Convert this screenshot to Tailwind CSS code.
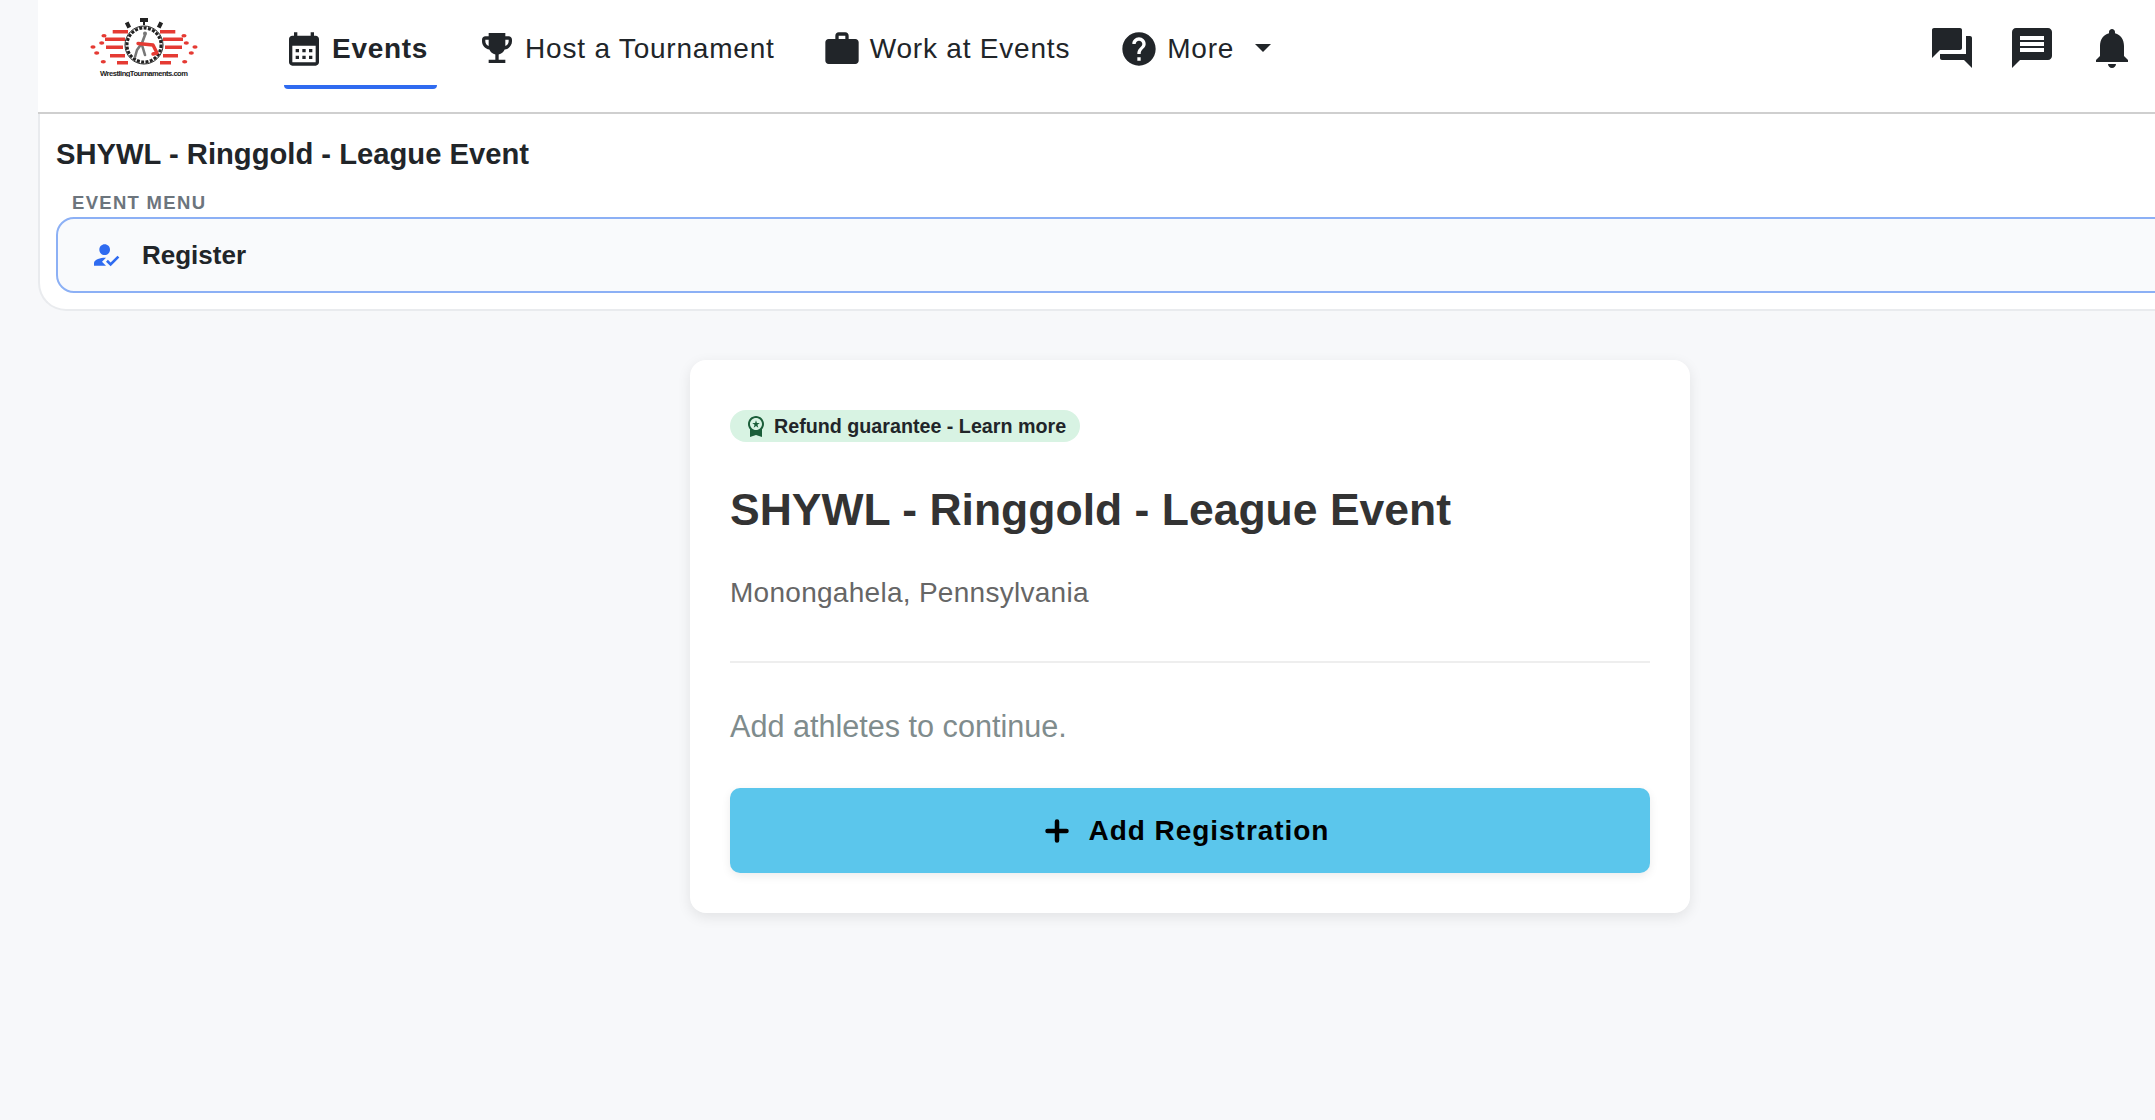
<!DOCTYPE html>
<html lang="en">

<head>
    <meta charset="UTF-8">
    <meta name="viewport" content="width=device-width, initial-scale=1.0">
    <script src="https://cdn.jsdelivr.net/npm/@tailwindcss/browser@4"></script>
    <title>SHYWL - Ringgold - League Event</title>
</head>

<body class="h-screen overflow-hidden bg-[#f7f8fa] font-['Liberation_Sans',Arial,sans-serif] text-[#212529]">
    <div class="flex pl-[38px]">
        <div class="w-[2304px] shrink-0">

            <!-- top nav -->
            <div class="w-[2117px] h-[114px] bg-white border-b-2 border-[#cfcfcf] flex items-start relative">
                <div class="w-[246px] pl-[52px] pt-[18px] shrink-0">
                    <svg class="w-[108px] h-[59px]" viewBox="0 0 108 59">
                        <g fill="#e53a33">
                            <rect x="22.7" y="12" width="15.3" height="3.5" />
                            <rect x="15" y="19.5" width="20" height="3.5" />
                            <rect x="16" y="27.5" width="17" height="3.5" />
                            <rect x="20" y="36" width="15" height="3.5" />
                            <rect x="27" y="43" width="11" height="3.5" />
                            <rect x="70" y="12" width="15.3" height="3.5" />
                            <rect x="73" y="19.5" width="20" height="3.5" />
                            <rect x="75" y="27.5" width="17" height="3.5" />
                            <rect x="73" y="36" width="15" height="3.5" />
                            <rect x="70" y="43" width="11" height="3.5" />
                            <ellipse cx="14" cy="17.7" rx="2.6" ry="1.8" />
                            <ellipse cx="11.7" cy="25" rx="2.6" ry="1.8" />
                            <ellipse cx="3" cy="29" rx="2.6" ry="1.8" />
                            <ellipse cx="6.7" cy="35" rx="2.6" ry="1.8" />
                            <ellipse cx="13.3" cy="43.7" rx="2.6" ry="1.8" />
                            <ellipse cx="94" cy="17.7" rx="2.6" ry="1.8" />
                            <ellipse cx="96.3" cy="25" rx="2.6" ry="1.8" />
                            <ellipse cx="105" cy="29" rx="2.6" ry="1.8" />
                            <ellipse cx="101.3" cy="35" rx="2.6" ry="1.8" />
                            <ellipse cx="94.7" cy="43.7" rx="2.6" ry="1.8" />
                        </g>
                        <rect x="50" y="0" width="8" height="4" fill="#222" />
                        <rect x="53" y="4" width="2" height="3" fill="#222" />
                        <rect x="36" y="4" width="4" height="6" fill="#222" transform="rotate(-25 38 7)" />
                        <rect x="68" y="4" width="4" height="6" fill="#222" transform="rotate(25 70 7)" />
                        <circle cx="54" cy="27" r="19" fill="#fff" stroke="#222" stroke-width="1" />
                        <circle cx="54" cy="27" r="17" fill="#fff" stroke="#222" stroke-width="3" stroke-dasharray="3 1.4" />
                        <circle cx="55" cy="15.5" r="2" fill="#777" />
                        <path d="M55 17l-3 8-5 7-2 7M52 27l3 10" fill="none" stroke="#777" stroke-width="2.6" stroke-linecap="round" stroke-linejoin="round" />
                        <path d="M48 25.5l15 1.5 4 8-4 1" fill="none" stroke="#e53a33" stroke-width="3.4" stroke-linecap="round" stroke-linejoin="round" />
                        <text x="54" y="58" font-size="7.6" font-weight="700" text-anchor="middle" textLength="88" fill="#222">WrestlingTournaments.com</text>
                    </svg>
                </div>

                <div class="flex items-start gap-[40px] text-[28px] leading-[40px] tracking-[0.8px]">
                    <a class="h-[89px] pr-[9px] flex items-start gap-[8px] pt-[29px] font-bold tracking-[0.7px] border-b-4 border-[#2f6bf0] rounded-b-sm">
                        <svg class="w-[40px] h-[40px] shrink-0" viewBox="0 0 24 24" fill="#212529"><path d="M19 4h-1V2h-2v2H8V2H6v2H5c-1.11 0-1.99.9-1.99 2L3 20c0 1.1.89 2 2 2h14c1.1 0 2-.9 2-2V6c0-1.1-.9-2-2-2zm0 16H5V10h14v10zM9 14H7v-2h2v2zm4 0h-2v-2h2v2zm4 0h-2v-2h2v2zm-8 4H7v-2h2v2zm4 0h-2v-2h2v2zm4 0h-2v-2h2v2z" /></svg>
                        <span>Events</span>
                    </a>
                    <a class="pr-[7px] flex items-start gap-[8px] pt-[28px]">
                        <svg class="w-[40px] h-[40px] shrink-0" viewBox="0 0 24 24" fill="#212529"><path d="M19 5h-2V3H7v2H5c-1.1 0-2 .9-2 2v1c0 2.55 1.92 4.63 4.39 4.94.63 1.5 1.98 2.63 3.61 2.96V19H7v2h10v-2h-4v-3.1c1.63-.33 2.98-1.46 3.61-2.96C19.08 12.63 21 10.55 21 8V7c0-1.1-.9-2-2-2zM5 8V7h2v3.82C5.84 10.4 5 9.3 5 8zm14 0c0 1.3-.84 2.4-2 2.82V7h2v1z" /></svg>
                        <span class="mt-[1px]">Host a Tournament</span>
                    </a>
                    <a class="pr-[9px] flex items-start gap-[8px] pt-[29px]">
                        <svg class="w-[40px] h-[40px] shrink-0" viewBox="0 0 24 24" fill="#212529"><path d="M20 6h-4V4c0-1.11-.89-2-2-2h-4c-1.11 0-2 .89-2 2v2H4c-1.11 0-1.99.89-1.99 2L2 19c0 1.11.89 2 2 2h16c1.11 0 2-.89 2-2V8c0-1.11-.89-2-2-2zm-6 0h-4V4h4v2z" /></svg>
                        <span>Work at Events</span>
                    </a>
                    <a class="flex items-start gap-[8px] pt-[29px]">
                        <svg class="w-[40px] h-[40px] shrink-0" viewBox="0 0 24 24" fill="#212529"><path d="M12 2C6.48 2 2 6.48 2 12s4.48 10 10 10 10-4.48 10-10S17.52 2 12 2zm1 17h-2v-2h2v2zm2.07-7.75l-.9.92C13.45 12.9 13 13.5 13 15h-2v-.5c0-1.1.45-2.1 1.17-2.83l1.24-1.26c.37-.36.59-.86.59-1.41 0-1.1-.9-2-2-2s-2 .9-2 2H8c0-2.21 1.79-4 4-4s4 1.79 4 4c0 .88-.36 1.68-.93 2.25z" /></svg>
                        <span>More</span>
                        <svg class="w-[16px] h-[8px] ml-[13px] mt-[15px]" viewBox="0 0 16 8" fill="#212529"><path d="M0 0h16L8 8z" /></svg>
                    </a>
                </div>

                <div class="ml-auto flex pt-[24px] pr-[19px] gap-[32px]">
                    <svg class="w-[48px] h-[48px]" viewBox="0 0 24 24" fill="#212529"><path d="M21 6h-2v9H6v2c0 .55.45 1 1 1h11l4 4V7c0-.55-.45-1-1-1zm-4 6V3c0-.55-.45-1-1-1H3c-.55 0-1 .45-1 1v14l4-4h10c.55 0 1-.45 1-1z" /></svg>
                    <svg class="w-[48px] h-[48px]" viewBox="0 0 24 24" fill="#212529"><path d="M20 2H4c-1.1 0-1.99.9-1.99 2L2 22l4-4h14c1.1 0 2-.9 2-2V4c0-1.1-.9-2-2-2zm-2 12H6v-2h12v2zm0-3H6V9h12v2zm0-3H6V6h12v2z" /></svg>
                    <svg class="w-[48px] h-[48px]" viewBox="0 0 24 24" fill="#212529"><path d="M12 22c1.1 0 2-.9 2-2h-4c0 1.1.9 2 2 2zm6-6v-5c0-3.07-1.63-5.64-4.5-6.32V4c0-.83-.67-1.5-1.5-1.5s-1.5.67-1.5 1.5v.68C7.64 5.36 6 7.92 6 11v5l-2 2v1h16v-1l-2-2z" /></svg>
                </div>
            </div>

            <!-- event header -->
            <div class="h-[197px] bg-white border-b-2 border-l-2 border-[#e9ebee] rounded-bl-[28px] pl-[16px] pr-[16px]">
                <h2 class="pt-[20px] text-[29.2px] leading-[40px] font-bold">SHYWL - Ringgold - League Event</h2>
                <div class="mt-[17px] pl-[16px] text-[18.5px] leading-[24px] font-bold tracking-[1.3px] text-[#6c757d]">EVENT MENU</div>
                <div class="mt-[2px] h-[76px] bg-[#f9fafc] border-2 border-[#8cb0f5] rounded-[18px] flex items-center pl-[32px]">
                    <svg class="w-[32px] h-[32px] shrink-0" viewBox="0 0 24 24" fill="#2f6bf0"><path d="M9 17l3-2.94c-.39-.04-.68-.06-1-.06-2.67 0-8 1.34-8 4v2h9l-3-3zm2-5c2.21 0 4-1.79 4-4s-1.79-4-4-4-4 1.79-4 4 1.79 4 4 4" /><path d="M15.47 20.5L12 17l1.4-1.41 2.07 2.08 5.13-5.17 1.4 1.41z" /></svg>
                    <span class="ml-[20px] text-[26px] font-bold">Register</span>
                </div>
            </div>

            <!-- registration card -->
            <div class="w-[1000px] mx-auto mt-[49px] bg-white rounded-[16px] shadow-[0_4px_14px_rgba(0,0,0,0.09)] px-[40px] pt-[50px] pb-[40px]">
                <div class="w-fit h-[32px] pl-[14px] pr-[14px] rounded-full bg-[#d8f3e3] flex items-center text-[19.7px] font-bold">
                    <svg class="w-[24px] h-[24px] shrink-0" viewBox="0 0 24 24" fill="#1b5e3a"><path d="M9.68 13.69 12 11.93l2.31 1.76-.88-2.85L15.75 9h-2.84L12 6.19 11.09 9H8.25l2.31 1.84-.88 2.85zM20 10c0-4.42-3.58-8-8-8s-8 3.58-8 8c0 2.03.76 3.87 2 5.28V23l6-2 6 2v-7.72c1.24-1.41 2-3.25 2-5.28zm-8-6c3.31 0 6 2.69 6 6s-2.69 6-6 6-6-2.69-6-6 2.69-6 6-6z" /></svg>
                    <span class="ml-[6px] mt-[1px]">Refund guarantee - Learn more</span>
                </div>
                <h1 class="mt-[38px] text-[44.5px] leading-[60px] font-bold text-[#333333]">SHYWL - Ringgold - League Event</h1>
                <p class="mt-[35px] text-[28px] leading-[36px] tracking-[0.28px] text-[#666666]">Monongahela, Pennsylvania</p>
                <div class="mt-[50px] h-[2px] bg-[#eeeeee]"></div>
                <p class="mt-[45px] text-[30.6px] leading-[36px] text-[#7f8c8d]">Add athletes to continue.</p>
                <button class="mt-[44px] w-full h-[85px] pr-[6px] rounded-[10px] bg-[#5bc6ec] shadow-[0_3px_10px_rgba(0,0,0,0.08)] flex items-center justify-center gap-[20px] text-[28px] font-bold tracking-[0.95px] text-black">
                    <svg class="w-[24px] h-[24px]" viewBox="0 0 24 24" fill="none" stroke="#000" stroke-width="4.5" stroke-linecap="round"><path d="M12 2.5v19M2.5 12h19" /></svg>
                    <span>Add Registration</span>
                </button>
            </div>
        </div>
    </div>
</body>

</html>
